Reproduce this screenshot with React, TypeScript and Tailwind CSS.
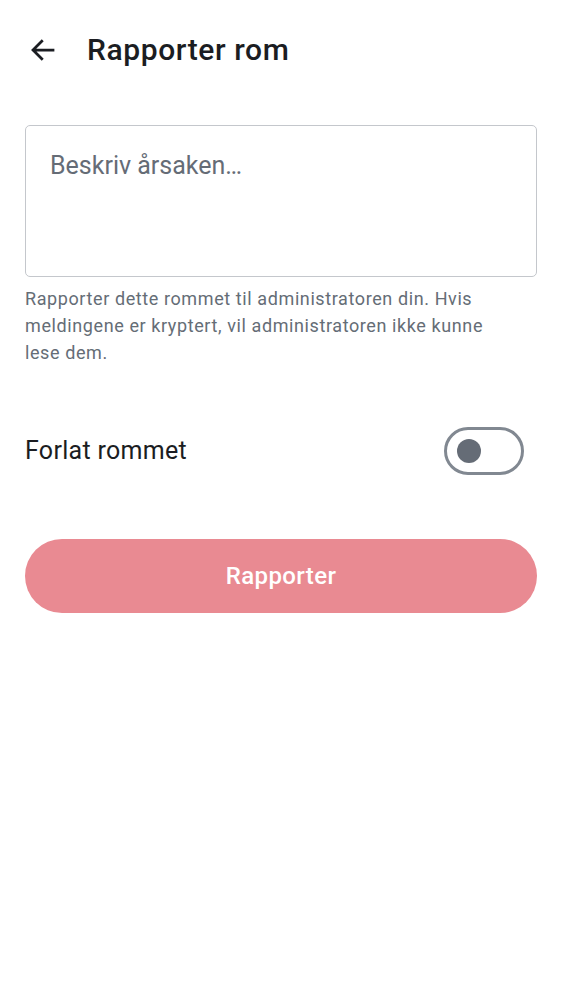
import React from "react";

export default function App() {
  return (
    <div className="w-[562px] h-[1000px] bg-white" style={{ fontFamily: "Roboto, 'Noto Sans', sans-serif" }}>
      <div className="flex items-center h-[100px] pl-[28px]">
        <svg width="30" height="30" viewBox="0 0 24 24" fill="none" className="text-[#1b1d22]">
          <path d="M20 12H4.5M11 5l-7 7 7 7" stroke="currentColor" strokeWidth="2.2" strokeLinecap="square" strokeLinejoin="miter" />
        </svg>
        <h1 className="ml-[29px] text-[30px] font-medium text-[#1b1d22] leading-none tracking-[0.6px]">Rapporter rom</h1>
      </div>
      <div className="px-[25px] pt-[25px]">
        <div className="h-[152px] border border-[#c4c7cc] rounded-[5px] pl-[24px] pt-[23px]">
          <div className="text-[25px] text-[#656c76] leading-[34px]">Beskriv årsaken…</div>
        </div>
        <p className="mt-[8px] pr-[16px] text-[18px] leading-[27px] text-[#656d76] tracking-[0.6px]">
          Rapporter dette rommet til administratoren din. Hvis meldingene er kryptert, vil administratoren ikke kunne lese dem.
        </p>
        <div className="mt-[60px] flex items-center justify-between h-[50px]">
          <span className="text-[25px] text-[#1b1d22] tracking-[0.3px]">Forlat rommet</span>
          <div className="mr-[13px] w-[80px] h-[48px] rounded-full border-[3px] border-[#818891] flex items-center pl-[10px]">
            <div className="w-[24px] h-[24px] rounded-full bg-[#656c76]" />
          </div>
        </div>
        <button className="mt-[63px] w-full h-[74px] rounded-full bg-[#e98a92] text-white text-[24px] font-medium tracking-[0.4px] flex items-center justify-center">
          Rapporter
        </button>
      </div>
    </div>
  );
}
